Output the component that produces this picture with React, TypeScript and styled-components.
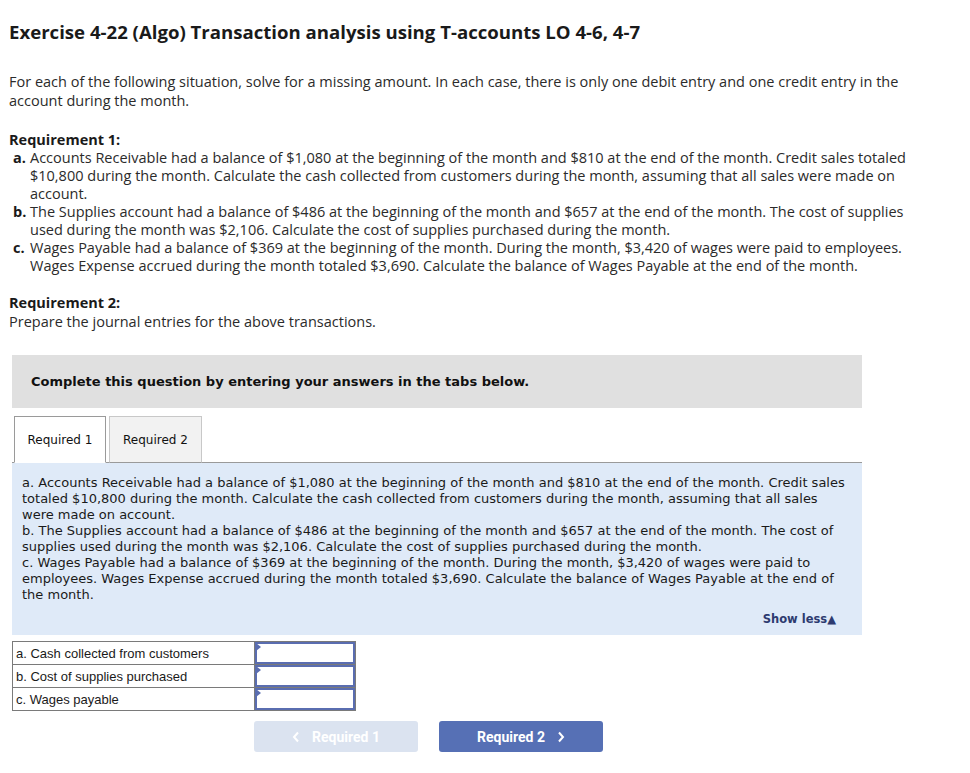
import styled, { createGlobalStyle } from "styled-components";
import { useState } from "react";

const Global = createGlobalStyle`
	body {
		margin: 0;
		background: #fff;
		color: #1a1a1a;
		font-family: "Open Sans", "Lato", sans-serif;
	}
`;

const Page = styled.div`
	padding: 18px 9px 20px 9px;
	width: 945px;
	box-sizing: border-box;
`;

const Title = styled.h1`
	margin: 0 0 26px 0;
	font-size: 18.6px;
	font-weight: 700;
	line-height: 28px;
	color: #1a1a1a;
	white-space: nowrap;
`;

const Para = styled.p`
	margin: 0;
	font-size: 14.5px;
	line-height: 19px;
	color: #2b2b2b;
`;

const ReqHead = styled.h2<{ $gap?: number }>`
	margin: ${(p) => p.$gap ?? 21}px 0 0 0;
	font-size: 14.5px;
	font-weight: 700;
	line-height: 18px;
`;

const ReqList = styled.ol`
	list-style: none;
	margin: 0;
	padding: 0 0 0 4px;
`;

const ReqItem = styled.li`
	display: grid;
	grid-template-columns: 17px 1fr;
	font-size: 14.5px;
	line-height: 18px;
	color: #2b2b2b;
`;

const Letter = styled.b`
	font-weight: 700;
	color: #1a1a1a;
`;

const Instruction = styled.div`
	margin: 24px 0 0 3px;
	width: 850px;
	height: 53px;
	box-sizing: border-box;
	background: #e0e0e0;
	display: flex;
	align-items: center;
	padding: 0 19px;
	font-family: "DejaVu Sans", Verdana, sans-serif;
	font-size: 13px;
	font-weight: 700;
	color: #111;
`;

const Tabs = styled.div`
	margin: 8px 0 0 3px;
	width: 850px;
	display: flex;
	gap: 3px;
	padding-left: 2px;
	box-sizing: border-box;
	border-bottom: 1px solid #9a9a9a;
`;

const Tab = styled.button<{ $active: boolean }>`
	height: 47px;
	width: ${(p) => (p.$active ? "92px" : "93px")};
	margin-bottom: -1px;
	border: 1px solid ${(p) => (p.$active ? "#9a9a9a" : "#c8c8c8")};
	border-bottom: ${(p) => (p.$active ? "1px solid #fff" : "1px solid #9a9a9a")};
	background: ${(p) => (p.$active ? "#fff" : "#f2f2f2")};
	font-family: "DejaVu Sans", Verdana, sans-serif;
	font-size: 12px;
	color: #111;
	padding: 0;
	cursor: pointer;
`;

const Panel = styled.div`
	margin-left: 3px;
	width: 850px;
	box-sizing: border-box;
	background: #dfeaf8;
	padding: 12px 10px 8px 10px;
	font-family: "DejaVu Sans", Verdana, sans-serif;
	font-size: 13px;
	line-height: 16px;
	color: #1a1a1a;
`;

const PanelText = styled.p`
	margin: 0;
`;

const ShowLess = styled.div`
	margin-top: 8px;
	text-align: right;
	padding-right: 16px;
	font-size: 11.5px;
	font-weight: 700;
	color: #2d3b70;
	cursor: pointer;
`;

const AnswerTable = styled.table`
	margin: 6px 0 0 3px;
	border-collapse: collapse;
	font-family: "Liberation Sans", Arial, sans-serif;
	font-size: 13px;
	color: #1a1a1a;
`;

const LabelCell = styled.td`
	width: 238px;
	height: 22px;
	padding: 0 0 0 3px;
	border: 1px solid #7a7a7a;
`;

const InputCell = styled.td`
	width: 100px;
	height: 22px;
	padding: 0;
	border: 1px solid #7a7a7a;
	position: relative;
`;

const AnswerInput = styled.input`
	display: block;
	width: 100%;
	height: 22px;
	box-sizing: border-box;
	border: 2px solid #5a6db0;
	outline: none;
	background: #fff;
`;

const Marker = styled.span`
	position: absolute;
	top: 1px;
	left: 1px;
	width: 0;
	height: 0;
	border-top: 4px solid transparent;
	border-bottom: 4px solid transparent;
	border-left: 5px solid #5a6db0;
`;

const NavRow = styled.div`
	display: flex;
	gap: 21px;
	margin: 10px 0 0 245px;
`;

const NavButton = styled.button<{ $disabled?: boolean }>`
	width: 164px;
	height: 31px;
	border: none;
	border-radius: 3px;
	background: ${(p) => (p.$disabled ? "#dbe3f0" : "#5670b5")};
	color: #fff;
	font-family: "Roboto", "Liberation Sans", sans-serif;
	font-size: 14px;
	font-weight: 700;
	display: flex;
	align-items: center;
	justify-content: center;
	gap: 12px;
	cursor: ${(p) => (p.$disabled ? "default" : "pointer")};
`;

const Chevron = ({ dir }: { dir: "left" | "right" }) => (
	<svg width="8" height="12" viewBox="0 0 8 12">
		<path
			d={dir === "left" ? "M6 1.5 L2 6 L6 10.5" : "M2 1.5 L6 6 L2 10.5"}
			fill="none"
			stroke="#fff"
			strokeWidth="2"
		/>
	</svg>
);

const rows = ["a. Cash collected from customers", "b. Cost of supplies purchased", "c. Wages payable"];

const App = () => {
	const [tab, setTab] = useState(0);
	const [values, setValues] = useState<string[]>(["", "", ""]);

	return (
		<Page>
			<Global />
			<Title>Exercise 4-22 (Algo) Transaction analysis using T-accounts LO 4-6, 4-7</Title>
			<Para>
				For each of the following situation, solve for a missing amount. In each case, there is only one debit entry and one credit entry in the
				account during the month.
			</Para>

			<ReqHead>Requirement 1:</ReqHead>
			<ReqList>
				<ReqItem>
					<Letter>a.</Letter>
					<span>
						Accounts Receivable had a balance of $1,080 at the beginning of the month and $810 at the end of the month. Credit sales totaled
						$10,800 during the month. Calculate the cash collected from customers during the month, assuming that all sales were made on
						account.
					</span>
				</ReqItem>
				<ReqItem>
					<Letter>b.</Letter>
					<span>
						The Supplies account had a balance of $486 at the beginning of the month and $657 at the end of the month. The cost of supplies
						used during the month was $2,106. Calculate the cost of supplies purchased during the month.
					</span>
				</ReqItem>
				<ReqItem>
					<Letter>c.</Letter>
					<span>
						Wages Payable had a balance of $369 at the beginning of the month. During the month, $3,420 of wages were paid to employees.
						Wages Expense accrued during the month totaled $3,690. Calculate the balance of Wages Payable at the end of the month.
					</span>
				</ReqItem>
			</ReqList>

			<ReqHead $gap={19}>Requirement 2:</ReqHead>
			<Para>Prepare the journal entries for the above transactions.</Para>

			<Instruction>Complete this question by entering your answers in the tabs below.</Instruction>

			<Tabs>
				<Tab $active={tab === 0} onClick={() => setTab(0)}>
					Required 1
				</Tab>
				<Tab $active={tab === 1} onClick={() => setTab(1)}>
					Required 2
				</Tab>
			</Tabs>

			<Panel>
				<PanelText>
					a. Accounts Receivable had a balance of $1,080 at the beginning of the month and $810 at the end of the month. Credit sales
					totaled $10,800 during the month. Calculate the cash collected from customers during the month, assuming that all sales were made
					on account.
				</PanelText>
				<PanelText>
					b. The Supplies account had a balance of $486 at the beginning of the month and $657 at the end of the month. The cost of
					supplies used during the month was $2,106. Calculate the cost of supplies purchased during the month.
				</PanelText>
				<PanelText>
					c. Wages Payable had a balance of $369 at the beginning of the month. During the month, $3,420 of wages were paid to employees.
					Wages Expense accrued during the month totaled $3,690. Calculate the balance of Wages Payable at the end of the month.
				</PanelText>
				<ShowLess>Show less▲</ShowLess>
			</Panel>

			<AnswerTable>
				<tbody>
					{rows.map((label, i) => (
						<tr key={label}>
							<LabelCell>{label}</LabelCell>
							<InputCell>
								<Marker />
								<AnswerInput
									value={values[i]}
									onChange={(e) => {
										const next = [...values];
										next[i] = e.target.value;
										setValues(next);
									}}
								/>
							</InputCell>
						</tr>
					))}
				</tbody>
			</AnswerTable>

			<NavRow>
				<NavButton $disabled>
					<Chevron dir="left" />
					Required 1
				</NavButton>
				<NavButton onClick={() => setTab(1)}>
					Required 2
					<Chevron dir="right" />
				</NavButton>
			</NavRow>
		</Page>
	);
};

export default App;
